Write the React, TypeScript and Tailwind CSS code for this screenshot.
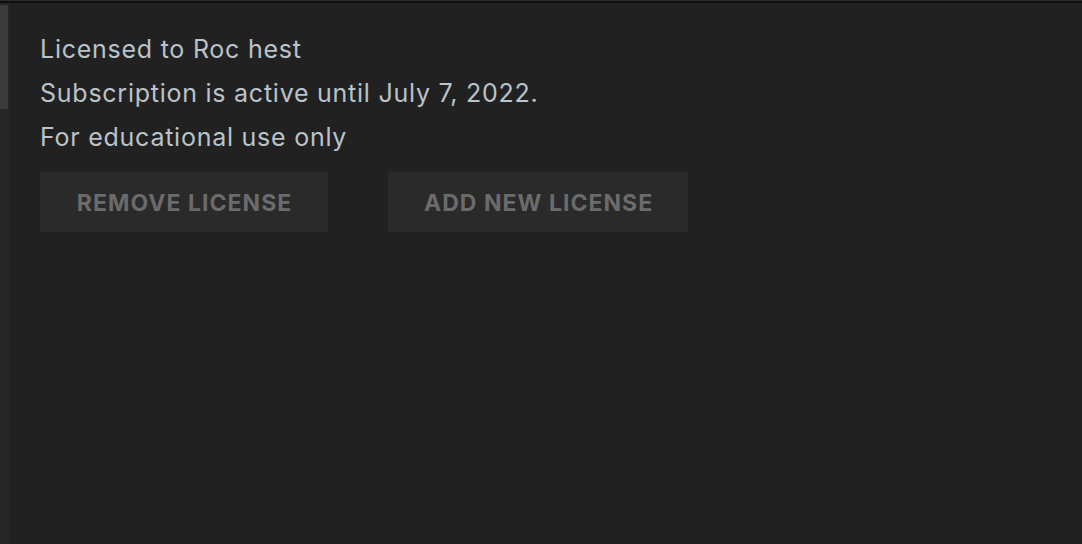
import React from 'react';

const LicensePanel: React.FC = () => {
  const lines = [
    'Licensed to Roc hest',
    'Subscription is active until July 7, 2022.',
    'For educational use only',
  ];

  return (
    <div className="flex flex-col w-[1082px] h-[544px] bg-[#212121] overflow-hidden font-['Inter','Liberation_Sans',sans-serif]">
      {/* top edge */}
      <div className="h-px bg-[#2c2c2c]" />
      <div className="h-[2px] bg-[#0e0e0e]" />

      <div className="flex flex-1">
        {/* scroll gutter */}
        <div className="w-[10px] bg-[#262626] pt-[2px]">
          <div className="w-[8px] h-[104px] bg-[#3a3a3a]" />
        </div>

        {/* content */}
        <div className="flex-1 pl-[30px] pt-[24px]">
          {lines.map((line) => (
            <p key={line} className="text-[25px] leading-[44px] tracking-[0.03em] text-[#b9c3c9]">
              {line}
            </p>
          ))}

          <div className="flex gap-[60px] mt-[13px]">
            <button className="w-[288px] h-[60px] pt-[3px] pl-[0.05em] bg-[#2a2a2a] text-[#6b6b6b] text-[23px] font-bold tracking-[0.045em]">
              REMOVE LICENSE
            </button>
            <button className="w-[300px] h-[60px] pt-[3px] pl-[0.05em] bg-[#2a2a2a] text-[#6b6b6b] text-[23px] font-bold tracking-[0.045em]">
              ADD NEW LICENSE
            </button>
          </div>
        </div>
      </div>
    </div>
  );
};

export default function App() {
  return <LicensePanel />;
}
